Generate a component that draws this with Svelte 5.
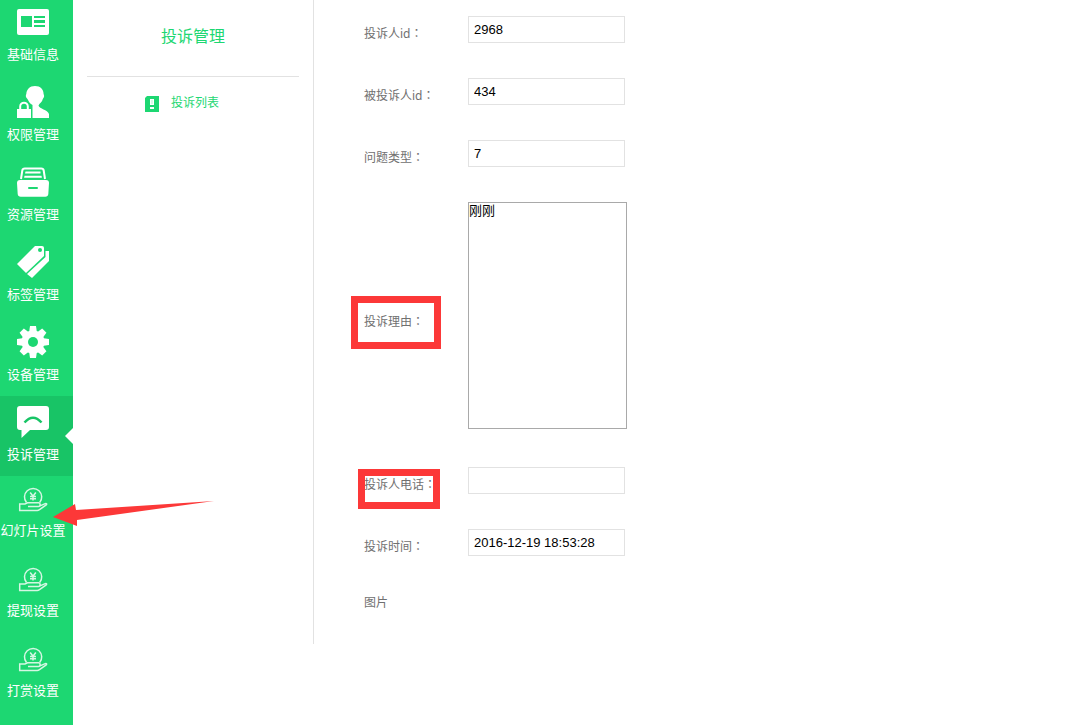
<script>
	const menu = [
		{ icon: 'info', title: '基础信息' },
		{ icon: 'auth', title: '权限管理' },
		{ icon: 'drawer', title: '资源管理' },
		{ icon: 'tag', title: '标签管理' },
		{ icon: 'gear', title: '设备管理' },
		{ icon: 'complain', title: '投诉管理' },
		{ icon: 'money', title: '幻灯片设置' },
		{ icon: 'money', title: '提现设置' },
		{ icon: 'money', title: '打赏设置' }
	];
	const teeth = [0, 45, 90, 135, 180, 225, 270, 315];

	let active = $state(5);
	let form = $state({
		userId: '2968',
		targetId: '434',
		type: '7',
		reason: '刚刚',
		phone: '',
		time: '2016-12-19 18:53:28'
	});
</script>

{#snippet icon(name)}
	{#if name === 'money'}
		<svg viewBox="0 0 32 28" width="32" height="28" aria-hidden="true">
			<g fill="none" stroke="#d5f7e3" stroke-width="1.5">
				<path d="M9.500 16.500a8.600 8.600 0 1 1 13.200 0" />
				<path d="M13.200 6.500l2.800 3.700 2.800-3.700M16 10v4.500M13 10.500h6M13 12.700h6" />
				<path
					d="M11 20.500h10.500c2 0 2.200-3.700 0-3.700H10.500l-2.500 1.200H2.700v6.500h17.500c1 0 1.600-.3 2.300-.8l6.700-4.800c1-.9.300-1.800-1-1.300l-5.200 2.300"
				/>
			</g>
		</svg>
	{:else}
		<svg viewBox="0 0 32 32" width="32" height="32" fill="#fff" aria-hidden="true">
			{#if name === 'info'}
				<rect y="3" width="32" height="26" rx="2" />
				<path d="M4 10h11v11H4zM17 10h11v2H17zM17 14h11v3H17zM17 19h11v2H17z" fill="#1dd772" />
			{:else if name === 'auth'}
				<path
					d="M18 0c5.500 0 8.500 3.500 8.600 8 1 2 .5 3.500-.8 5-.6 3-3 4-4.300 6.500 1 3.500 9 4 10.500 8.500V32H15.500V19c-3-1.500-4-4-5-6-1.900-1.500-2-3.500-1.200-5C9.800 3.500 12.500 0 18 0z"
				/>
				<path d="M3.200 24v-3.500a3.800 3.800 0 0 1 7.600 0V24" fill="none" stroke="#fff" stroke-width="2" />
				<rect y="23" width="14" height="9" />
			{:else if name === 'drawer'}
				<path
					d="M4 13L5.300 4.500q.3-2 2.500-2h16.400q2.200 0 2.500 2L28 13"
					fill="none"
					stroke="#fff"
					stroke-width="2"
				/>
				<path d="M8.500 5.500h15v2H8zM7.500 9.700h17l.4 2H7.100z" />
				<path d="M3 14h26q3 0 3 3l-.7 11q-.3 2.800-3 2.800H3.700q-2.700 0-3-2.800L0 17q0-3 3-3z" />
				<rect x="11" y="21" width="10" height="2" rx="1" fill="#1dd772" />
			{:else if name === 'tag'}
				<path d="M18 0h7q2 0 2 2v8L9 27 0 18z" />
				<path d="M28.500 5H32v10L15 32l-5-4L28.500 11z" />
				<circle cx="23" cy="4" r="2" fill="#1dd772" />
			{:else if name === 'gear'}
				<circle cx="16" cy="16" r="11.500" />
				{#each teeth as deg}
					<path d="M13 0h6l1 7h-8z" transform="rotate({deg} 16 16)" />
				{/each}
				<circle cx="16" cy="16" r="5" fill="#1dd772" />
			{:else}
				<path d="M3 0h26q3 0 3 3v18q0 3-3 3H13l-8.500 8V24H3q-3 0-3-3V3q0-3 3-3z" />
				<path d="M7.500 16.500q8.500-9.500 17 0" fill="none" stroke="#18c466" stroke-width="2.500" />
			{/if}
		</svg>
	{/if}
{/snippet}

<div class="page">
	<nav class="sidebar">
		<ul>
			{#each menu as item, i}
				<li class:active={i === active}>
					<a href="#menu{i}" onclick={() => (active = i)}>
						{@render icon(item.icon)}
						<span>{item.title}</span>
					</a>
				</li>
			{/each}
		</ul>
	</nav>

	<aside class="submenu">
		<h2>投诉管理</h2>
		<a class="sub-link" href="#list">
			<svg viewBox="0 0 14 16" width="14" height="16" aria-hidden="true">
				<path d="M2 0h12v16H0V2z" fill="#1dd772" />
				<path d="M5 3h4v6H5zM5 11h4v2H5z" fill="#fff" />
				<path d="M6.500 4h1v4h-1z" fill="#b9f2d2" />
			</svg>
			<span>投诉列表</span>
		</a>
	</aside>

	<main>
		<form>
			<div class="row">
				<label for="userId">投诉人id<span class="colon">：</span></label>
				<input id="userId" type="text" bind:value={form.userId} />
			</div>
			<div class="row">
				<label for="targetId">被投诉人id<span class="colon">：</span></label>
				<input id="targetId" type="text" bind:value={form.targetId} />
			</div>
			<div class="row">
				<label for="type">问题类型<span class="colon">：</span></label>
				<input id="type" type="text" bind:value={form.type} />
			</div>
			<div class="row reason">
				<label for="reason">投诉理由<span class="colon">：</span></label>
				<textarea id="reason" bind:value={form.reason}></textarea>
			</div>
			<div class="row">
				<label for="phone">投诉人电话<span class="colon">：</span></label>
				<input id="phone" type="text" bind:value={form.phone} />
			</div>
			<div class="row">
				<label for="time">投诉时间<span class="colon">：</span></label>
				<input id="time" type="text" bind:value={form.time} />
			</div>
			<div class="row picture">
				<span>图片</span>
			</div>
		</form>
	</main>

	<div class="mark mark-reason"></div>
	<div class="mark mark-phone"></div>
	<svg class="arrow" viewBox="0 0 162 25" width="162" height="25" aria-hidden="true">
		<path d="M0 16L22 3l1 6L161 0 24 19v6z" fill="#fc3838" />
	</svg>
</div>

<style>
	:global(body) {
		margin: 0;
		background: #fff;
	}

	.page {
		position: relative;
		display: flex;
		align-items: flex-start;
		min-height: 100vh;
		font-family: 'Noto Sans', 'Noto Sans CJK SC', sans-serif;
		font-size: 12px;
		color: #707070;
	}

	a {
		text-decoration: none;
	}

	.sidebar {
		flex: none;
		align-self: stretch;
		width: 73px;
		background: #1dd772;
	}
	.sidebar ul {
		margin: 0;
		padding: 0;
		list-style: none;
	}
	.sidebar li {
		position: relative;
	}
	.sidebar a {
		display: flex;
		flex-direction: column;
		align-items: center;
		gap: 7px;
		box-sizing: border-box;
		height: 80px;
		padding: 10px 7px 0 0;
		color: #fff;
		font-size: 13px;
		line-height: 18px;
		white-space: nowrap;
	}
	.sidebar li:first-child a {
		height: 76px;
		padding-top: 6px;
	}
	.sidebar svg {
		flex: none;
	}
	.sidebar .active {
		background: #18c466;
	}
	.sidebar .active::after {
		content: '';
		position: absolute;
		top: 32px;
		right: 0;
		border: 8px solid transparent;
		border-right-color: #fff;
		border-left: 0;
	}

	.submenu {
		flex: none;
		box-sizing: border-box;
		width: 241px;
		min-height: 644px;
		padding: 0 14px;
		border-right: 1px solid #e2e2e2;
	}
	.submenu h2 {
		margin: 0;
		padding: 24px 0 28px;
		border-bottom: 1px solid #e2e2e2;
		color: #1dd772;
		font-size: 16px;
		font-weight: normal;
		line-height: 24px;
		text-align: center;
	}
	.sub-link {
		display: flex;
		gap: 12px;
		padding: 19px 0 0 58px;
		color: #1dd772;
		line-height: 14px;
	}

	main {
		flex: 1;
		padding: 16px 0 0 50px;
	}
	form {
		display: flex;
		flex-direction: column;
		gap: 35px;
	}
	.row {
		display: flex;
		align-items: center;
	}
	label {
		width: 104px;
		padding-top: 8px;
		line-height: 14px;
	}
	.colon {
		font-family: 'Noto Sans CJK TC', sans-serif;
	}
	input,
	textarea {
		box-sizing: border-box;
		margin: 0;
		border: 1px solid #e2e2e2;
		background: #fff;
		color: #000;
		font-family: 'Liberation Sans', 'Noto Sans CJK SC', sans-serif;
		font-size: 13px;
		outline: none;
	}
	input {
		width: 157px;
		height: 27px;
		padding: 0 5px;
	}
	textarea {
		width: 159px;
		height: 227px;
		padding: 0;
		border-color: #a9a9a9;
		line-height: 15px;
		resize: none;
	}
	.reason {
		padding-bottom: 3px;
	}
	.reason label {
		padding-top: 12px;
	}
	.picture {
		padding-top: 5px;
		line-height: 14px;
	}

	.mark {
		position: absolute;
		box-sizing: border-box;
		border: 7px solid #fc3838;
		pointer-events: none;
	}
	.mark-reason {
		top: 296px;
		left: 351px;
		width: 90px;
		height: 53px;
	}
	.mark-phone {
		top: 469px;
		left: 358px;
		width: 82px;
		height: 40px;
	}
	.arrow {
		position: absolute;
		top: 501px;
		left: 53px;
		pointer-events: none;
	}
</style>
